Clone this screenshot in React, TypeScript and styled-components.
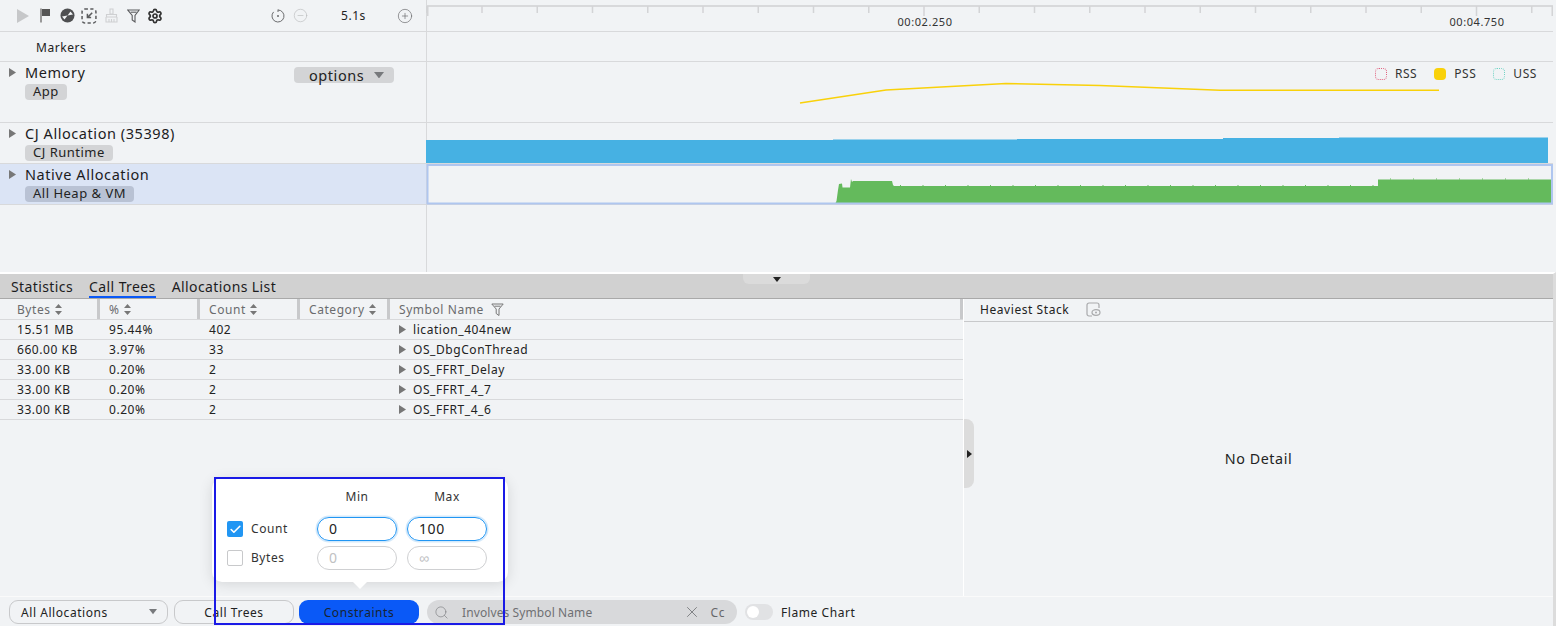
import React from "react";
import styled, { createGlobalStyle } from "styled-components";
import { CircleMinus, CirclePlus, Search, X, Settings, Check } from "lucide-react";

const GlobalStyle = createGlobalStyle`
  html, body { margin: 0; padding: 0; background: #f1f3f5; }
  body {
    font-family: "Noto Sans", "Liberation Sans", sans-serif;
    letter-spacing: 0.56px;
    color: #1c1c1e;
  }
`;

const rows = [
  { bytes: "15.51 MB", pct: "95.44%", count: "402", name: "lication_404new" },
  { bytes: "660.00 KB", pct: "3.97%", count: "33", name: "OS_DbgConThread" },
  { bytes: "33.00 KB", pct: "0.20%", count: "2", name: "OS_FFRT_Delay" },
  { bytes: "33.00 KB", pct: "0.20%", count: "2", name: "OS_FFRT_4_7" },
  { bytes: "33.00 KB", pct: "0.20%", count: "2", name: "OS_FFRT_4_6" },
];

const columns = ["Bytes", "%", "Count", "Category"];

const ticks = Array.from({ length: 21 }, (_, i) => 427 + i * 55.25);

// little teeth along the top of the native allocation area
const greenSpikes = Array.from({ length: 22 }, (_, i) => 900 + i * 22.5);
const greenSpikes2 = Array.from({ length: 8 }, (_, i) => 1390 + i * 23);

const Sorter = () => (
  <SortIcon width="7" height="11" viewBox="0 0 7 11">
    <path d="M3.5 0L7 4H0z M3.5 11L0 7h7z" fill="#777" />
  </SortIcon>
);

const Caret = () => (
  <CaretIcon width="7" height="9" viewBox="0 0 7 9">
    <path d="M0 0L7 4.5L0 9z" fill="#777" />
  </CaretIcon>
);

const DownCaret = ({ width }: { width: number }) => (
  <svg width={width} height={width * 0.65} viewBox="0 0 11 7">
    <path d="M0 0H11L5.5 7z" fill="#77797c" />
  </svg>
);

const Toolbar = () => (
  <ToolbarRow>
    <ToolIcon>
      <svg width="14" height="16" viewBox="0 0 14 16"><path d="M1 1L13 8L1 15z" fill="#c6c7c9" /></svg>
    </ToolIcon>
    <ToolIcon>
      <svg width="12" height="15" viewBox="0 0 12 15"><path d="M1 0.5H3V14.5H1z" fill="#999" /><path d="M3 1H11V8H3z" fill="#555" /></svg>
    </ToolIcon>
    <ToolIcon>
      <svg width="15" height="15" viewBox="0 0 15 15">
        <circle cx="7.5" cy="7.5" r="7" fill="#4e4f51" />
        <path d="M7.5 7.5L10.500 3.500L13 6.500z M7.5 7.5L4.500 11.500L2 8.500z" fill="#f1f3f5" />
      </svg>
    </ToolIcon>
    <ToolIcon>
      <svg width="16" height="16" viewBox="0 0 15 15" fill="none" stroke="#5b5c5e" strokeWidth="1.4">
        <rect x="1" y="1" width="13" height="13" rx="2.5" strokeDasharray="3 2.2" />
        <path d="M10.5 4.5L6 9M6 5.5V9H9.5" />
      </svg>
    </ToolIcon>
    <ToolIcon>
      <svg width="15" height="15" viewBox="0 0 15 15" fill="none" stroke="#cfd0d2" strokeWidth="1.1">
        <path d="M6 1H9V6H6z M2.5 6.5H12.5V9H2.5z M2 9V14H13V9 M5 11V14 M7.5 11V14 M10 11V14" />
      </svg>
    </ToolIcon>
    <ToolIcon>
      <svg width="13" height="14" viewBox="0 0 13 14" fill="none" stroke="#5b5c5e" strokeWidth="1.1">
        <path d="M0.8 1H12.2L8 6.5V13L5.2 11V6.5z" />
        <path d="M3.6 3.2H9.6" />
      </svg>
    </ToolIcon>
    <ToolIcon>
      <Settings size={16} strokeWidth={2.6} color="#333" />
    </ToolIcon>
    <ZoomGroup>
      <ToolIcon>
        <svg width="14" height="14" viewBox="0 0 14 14" fill="none" stroke="#6a6b6d" strokeWidth="1">
          <path d="M7 1A6 6 0 1 1 2.6 2.9" />
          <path d="M7 0.5V3" />
          <circle cx="7" cy="7" r="1" fill="#6a6b6d" stroke="none" />
        </svg>
      </ToolIcon>
      <ToolIcon>
        <CircleMinus size={15} strokeWidth={1} color="#b9babc" />
      </ToolIcon>
      <ZoomValue>5.1s</ZoomValue>
      <ToolIcon>
        <CirclePlus size={16} strokeWidth={1} color="#66676a" />
      </ToolIcon>
    </ZoomGroup>
  </ToolbarRow>
);

const App = () => {
  return (
    <Page>
      <GlobalStyle />
      <Timeline>
        <Track $height={32}>
          <LabelCell>
            <Toolbar />
          </LabelCell>
          <ChartCell>
            <Chart viewBox="427 0 1126 31">
              <rect x="427" y="5" width="1126" height="2" fill="#d8d9db" />
              {ticks.map((x, i) => (
                <rect key={i} x={x - 1} y="6" width="1.5" height={i === 9 || i === 19 ? 10 : 7} fill="#d3d4d6" />
              ))}
              <rect x="427" y="6" width="1.5" height="10" fill="#d3d4d6" />
              <rect x="1551.5" y="6" width="1.5" height="10" fill="#d3d4d6" />
              <RulerText x="925" y="26">00:02.250</RulerText>
              <RulerText x="1477" y="26">00:04.750</RulerText>
            </Chart>
          </ChartCell>
        </Track>

        <Track $height={30}>
          <LabelCell>
            <MarkerTitle>Markers</MarkerTitle>
          </LabelCell>
          <ChartCell />
        </Track>

        <Track $height={61}>
          <LabelCell>
            <Caret />
            <TitleBlock>
              <TrackTitle>Memory</TrackTitle>
              <Tag>App</Tag>
            </TitleBlock>
            <OptionsPill>
              options
              <DownCaret width={10} />
            </OptionsPill>
          </LabelCell>
          <ChartCell>
            <Chart viewBox="427 62 1126 60">
              <polyline
                points="800,103 886,90 1006,83.5 1100,85.5 1220,90.3 1439,90.3"
                fill="none"
                stroke="#f9d10a"
                strokeWidth="1.5"
              />
            </Chart>
            <Legend>
              <LegendItem>
                <LegendSwatch $color="#e0607e" />
                RSS
              </LegendItem>
              <LegendItem>
                <LegendSwatch $color="#f9d10a" $filled />
                PSS
              </LegendItem>
              <LegendItem>
                <LegendSwatch $color="#6fd3c4" />
                USS
              </LegendItem>
            </Legend>
          </ChartCell>
        </Track>

        <Track $height={41}>
          <LabelCell>
            <Caret />
            <TitleBlock>
              <TrackTitle>CJ Allocation (35398)</TrackTitle>
              <Tag>CJ Runtime</Tag>
            </TitleBlock>
          </LabelCell>
          <ChartCell>
            <Chart viewBox="427 123 1126 40">
              <path
                d="M426 140H833V139.5H1017V139H1223V138H1339V137.4H1548V163H426z"
                fill="#46b1e3"
              />
            </Chart>
          </ChartCell>
        </Track>

        <Track $height={41}>
          <LabelCell $selected>
            <Caret />
            <TitleBlock>
              <TrackTitle>Native Allocation</TrackTitle>
              <Tag $selected>All Heap &amp; VM</Tag>
            </TitleBlock>
          </LabelCell>
          <ChartCell>
            <Chart viewBox="427 164 1126 40">
              <path
                d="M835 204L836.500 201L838 190L839 184L842 183.500L842.500 187.500L850 187.500L851 179L852 182L853 181L892 181L893 185L894 186L1378 186L1378 179.500L1553 179.500V204z"
                fill="#64ba5c"
              />
              {greenSpikes.map((x) => (
                <rect key={x} x={x} y="185" width="1" height="1" fill="#64ba5c" />
              ))}
              {greenSpikes2.map((x) => (
                <rect key={x} x={x} y="178.500" width="1" height="1" fill="#64ba5c" />
              ))}
              <rect x="427.500" y="165" width="1124.500" height="38.500" fill="none" stroke="#afc6ef" strokeWidth="2" />
            </Chart>
          </ChartCell>
        </Track>

        <EmptyTrack>
          <LabelCell />
          <ChartCell />
        </EmptyTrack>
      </Timeline>

      <Workspace>
        <TabBar>
          <Tab>Statistics</Tab>
          <Tab $active>Call Trees</Tab>
          <Tab>Allocations List</Tab>
          <SashTab>
            <svg width="8" height="5" viewBox="0 0 8 5">
              <path d="M0 0H8L4 5z" fill="#222" />
            </svg>
          </SashTab>
        </TabBar>

        <Lower>
          <TablePane>
            <HeaderRow>
              {columns.map((c) => (
                <HeaderCell key={c}>
                  {c}
                  <Sorter />
                </HeaderCell>
              ))}
              <SymbolHeader>
                Symbol Name
                <svg width="13" height="13" viewBox="0 0 13 13" fill="none" stroke="#777" strokeWidth="1">
                  <path d="M0.8 1H12.2L8 6V12.500L5.200 10.500V6z" />
                  <path d="M3.500 3.200H9.500" />
                </svg>
              </SymbolHeader>
            </HeaderRow>
            {rows.map((r) => (
              <BodyRow key={r.name}>
                <BodyCell>{r.bytes}</BodyCell>
                <BodyCell>{r.pct}</BodyCell>
                <BodyCell>{r.count}</BodyCell>
                <BodyCell />
                <SymbolCell>
                  <Caret />
                  {r.name}
                </SymbolCell>
              </BodyRow>
            ))}
          </TablePane>
          <DetailPane>
            <DetailHeader>
              Heaviest Stack
              <svg width="15" height="15" viewBox="0 0 15 15" fill="none" stroke="#a9aaac" strokeWidth="1.2">
                <path d="M6 14H3A2 2 0 0 1 1 12V3A2 2 0 0 1 3 1H11A2 2 0 0 1 13 3V6" />
                <ellipse cx="10" cy="10.500" rx="4" ry="2.800" />
                <circle cx="10" cy="10.500" r="1" fill="#a9aaac" stroke="none" />
              </svg>
            </DetailHeader>
            <DetailBody>No Detail</DetailBody>
            <SideHandle>
              <svg width="5" height="8" viewBox="0 0 5 8">
                <path d="M0 0L5 4L0 8z" fill="#222" />
              </svg>
            </SideHandle>
          </DetailPane>
        </Lower>

        <BottomBar>
          <SelectBox>
            All Allocations
            <DownCaret width={8} />
          </SelectBox>
          <OutlineButton>Call Trees</OutlineButton>
          <PrimaryButton>Constraints</PrimaryButton>
          <SearchBox>
            <Search size={15} strokeWidth={1} color="#77797c" />
            <SearchText>Involves Symbol Name</SearchText>
            <X size={18} strokeWidth={1.2} color="#77797c" />
            <CaseToggle>Cc</CaseToggle>
          </SearchBox>
          <Toggle>
            <Knob />
          </Toggle>
          <ToggleLabel>Flame Chart</ToggleLabel>
        </BottomBar>
      </Workspace>

      <Popover>
        <PopHeader>
          <span>Min</span>
          <span>Max</span>
        </PopHeader>
        <PopRow>
          <CheckBox $checked>
            <Check size={13} strokeWidth={3} color="#fff" />
          </CheckBox>
          <PopLabel>Count</PopLabel>
          <ValueBox $active>0</ValueBox>
          <ValueBox $active>100</ValueBox>
        </PopRow>
        <PopRow>
          <CheckBox />
          <PopLabel>Bytes</PopLabel>
          <ValueBox>0</ValueBox>
          <ValueBox>∞</ValueBox>
        </PopRow>
      </Popover>
      <Highlight />
    </Page>
  );
};

export default App;

const Page = styled.div`
  position: relative;
  width: 1556px;
  height: 626px;
  overflow: hidden;
  display: flex;
  flex-direction: column;
  background: #f1f3f5;
`;

const Timeline = styled.div`
  height: 272px;
  width: 1553px;
  display: flex;
  flex-direction: column;
  flex-shrink: 0;
`;

const Workspace = styled.div`
  flex: 1;
  min-height: 0;
  display: flex;
  flex-direction: column;
  border-right: 3px solid #dcdcdc;
  border-top: 2px solid #fff;
`;

const Track = styled.div<{ $height: number }>`
  height: ${(p) => p.$height}px;
  box-sizing: border-box;
  display: flex;
  flex-shrink: 0;
  border-bottom: 1px solid #d8d9db;
`;

const EmptyTrack = styled.div`
  flex: 1;
  display: flex;
`;

const LabelCell = styled.div<{ $selected?: boolean }>`
  width: 427px;
  flex-shrink: 0;
  display: flex;
  align-items: flex-start;
  padding-left: 9px;
  box-sizing: border-box;
  border-right: 1px solid #d8d9db;
  background: ${(p) => (p.$selected ? "#dbe4f5" : "transparent")};
`;

const ChartCell = styled.div`
  position: relative;
  flex: 1;
  min-width: 0;
`;

const Chart = styled.svg`
  display: block;
  width: 100%;
  height: 100%;
  overflow: visible;
`;

const RulerText = styled.text`
  font-size: 11px;
  fill: #333;
  text-anchor: middle;
`;

const ToolbarRow = styled.div`
  display: flex;
  align-items: center;
  height: 31px;
  width: 100%;
  padding-left: 3px;
`;

const ToolIcon = styled.div`
  width: 22px;
  height: 22px;
  flex-shrink: 0;
  display: flex;
  align-items: center;
  justify-content: center;
`;

const ZoomGroup = styled.div`
  display: flex;
  align-items: center;
  margin-left: 101px;
`;

const ZoomValue = styled.div`
  width: 83px;
  padding-left: 30px;
  box-sizing: border-box;
  font-size: 12px;
  color: #222;
`;

const MarkerTitle = styled.div`
  margin-left: 27px;
  line-height: 31px;
  font-size: 12px;
  color: #222;
`;

const CaretIcon = styled.svg`
  display: block;
  flex-shrink: 0;
  margin-top: 6px;
`;

const TitleBlock = styled.div`
  display: flex;
  flex-direction: column;
  align-items: flex-start;
  margin-left: 9px;
`;

const TrackTitle = styled.div`
  font-size: 14.5px;
  line-height: 20px;
  color: #1c1c1e;
`;

const Tag = styled.div<{ $selected?: boolean }>`
  height: 16px;
  margin-top: 2px;
  padding: 0 8px;
  border-radius: 4px;
  font-size: 13px;
  line-height: 15px;
  letter-spacing: 0.5px;
  color: #222;
  background: ${(p) => (p.$selected ? "#b9c2d4" : "#d3d4d6")};
`;

const OptionsPill = styled.div`
  margin-left: auto;
  margin-right: 32px;
  margin-top: 5px;
  width: 100px;
  height: 16px;
  box-sizing: border-box;
  padding: 0 10px 0 15px;
  display: flex;
  align-items: center;
  justify-content: space-between;
  border-radius: 4px;
  background: #d3d4d6;
  font-size: 14.5px;
  color: #222;
`;

const Legend = styled.div`
  position: absolute;
  top: 5px;
  right: 16px;
  display: flex;
  gap: 17px;
`;

const LegendItem = styled.div`
  display: flex;
  align-items: center;
  gap: 8px;
  font-size: 12px;
  line-height: 14px;
  color: #333;
`;

const LegendSwatch = styled.span<{ $color: string; $filled?: boolean }>`
  width: 12px;
  height: 12px;
  box-sizing: border-box;
  border-radius: 4px;
  border: 1px dotted ${(p) => p.$color};
  background: ${(p) => (p.$filled ? p.$color : "transparent")};
`;

const TabBar = styled.div`
  position: relative;
  height: 25px;
  box-sizing: border-box;
  flex-shrink: 0;
  display: flex;
  align-items: stretch;
  gap: 16px;
  padding-left: 11px;
  background: #d1d1d1;
  border-bottom: 1px solid #a9a9a9;
`;

const Tab = styled.div<{ $active?: boolean }>`
  font-size: 14px;
  line-height: 25px;
  height: 24px;
  box-sizing: border-box;
  letter-spacing: 0.4px;
  color: #1c1c1e;
  border-bottom: ${(p) => (p.$active ? "2px solid #0a59f7" : "none")};
`;

const SashTab = styled.div`
  position: absolute;
  left: 743px;
  top: 0;
  width: 67px;
  height: 10px;
  display: flex;
  align-items: center;
  justify-content: center;
  background: #dbdbdb;
  border-radius: 0 0 6px 6px;
`;

const Lower = styled.div`
  flex: 1;
  min-height: 0;
  display: flex;
`;

const TablePane = styled.div`
  width: 964px;
  flex-shrink: 0;
  box-sizing: border-box;
  border-right: 1px solid #fff;
`;

const HeaderRow = styled.div`
  display: grid;
  grid-template-columns: 100px 100px 100px 90px 1fr;
  height: 21px;
  box-sizing: border-box;
  border-bottom: 1px solid #d8d9db;
`;

const HeaderCell = styled.div`
  display: flex;
  align-items: center;
  gap: 4px;
  padding-left: 9px;
  font-size: 12px;
  color: #6a6b6d;
  border-right: 3px solid #c8c9cb;
  &:first-child { padding-left: 17px; }
`;

const SymbolHeader = styled.div`
  display: flex;
  align-items: center;
  gap: 7px;
  padding-left: 9px;
  font-size: 12px;
  color: #6a6b6d;
  border-right: 3px solid #c8c9cb;
`;

const SortIcon = styled.svg`
  display: block;
`;

const BodyRow = styled.div`
  display: grid;
  grid-template-columns: 100px 100px 100px 90px 1fr;
  height: 20px;
  box-sizing: border-box;
  border-bottom: 1px solid #d8d9db;
`;

const BodyCell = styled.div`
  padding-left: 9px;
  font-size: 12px;
  line-height: 19px;
  color: #222;
  &:first-child { padding-left: 17px; }
`;

const SymbolCell = styled.div`
  display: flex;
  align-items: center;
  gap: 7px;
  padding-left: 9px;
  font-size: 12px;
  color: #222;
  svg { margin-top: 0; }
`;

const DetailPane = styled.div`
  position: relative;
  flex: 1;
  display: flex;
  flex-direction: column;
`;

const DetailHeader = styled.div`
  height: 23px;
  flex-shrink: 0;
  box-sizing: border-box;
  display: flex;
  align-items: center;
  gap: 17px;
  padding: 0 0 1px 16px;
  font-size: 12px;
  color: #222;
  border-bottom: 1px solid #c8c9cb;
`;

const DetailBody = styled.div`
  flex: 1;
  display: flex;
  align-items: center;
  justify-content: center;
  padding-bottom: 2px;
  font-size: 14.3px;
  color: #222;
`;

const SideHandle = styled.div`
  position: absolute;
  left: 0;
  top: 120px;
  width: 10px;
  height: 69px;
  display: flex;
  align-items: center;
  justify-content: center;
  background: #dcdcdc;
  border-radius: 0 8px 8px 0;
`;

const BottomBar = styled.div`
  height: 30px;
  flex-shrink: 0;
  box-sizing: border-box;
  display: flex;
  align-items: center;
  padding: 3px 0 2px 9px;
  border-top: 1px solid #fafafa;
`;

const SelectBox = styled.div`
  width: 159px;
  height: 24px;
  box-sizing: border-box;
  display: flex;
  align-items: center;
  justify-content: space-between;
  padding: 0 10px 0 11px;
  border: 1px solid #c8c9cb;
  border-radius: 9px;
  font-size: 12px;
  color: #222;
`;

const OutlineButton = styled.div`
  width: 120px;
  height: 24px;
  margin-left: 6px;
  box-sizing: border-box;
  display: flex;
  align-items: center;
  justify-content: center;
  border: 1px solid #c8c9cb;
  border-radius: 9px;
  font-size: 12px;
  color: #222;
`;

const PrimaryButton = styled.div`
  width: 120px;
  height: 24px;
  margin-left: 5px;
  display: flex;
  align-items: center;
  justify-content: center;
  border-radius: 9px;
  background: #0a59f7;
  font-size: 12px;
  color: #182431;
`;

const SearchBox = styled.div`
  width: 310px;
  height: 24px;
  margin-left: 8px;
  box-sizing: border-box;
  display: flex;
  align-items: center;
  padding: 0 12px 0 7px;
  border-radius: 12px;
  background: #d8d9db;
`;

const SearchText = styled.div`
  flex: 1;
  margin-left: 13px;
  font-size: 12px;
  letter-spacing: 0.1px;
  color: #6f7073;
`;

const CaseToggle = styled.div`
  margin-left: 10px;
  font-size: 12px;
  color: #66676a;
`;

const Toggle = styled.div`
  width: 28px;
  height: 16px;
  margin-left: 8px;
  padding: 2px;
  box-sizing: border-box;
  border-radius: 8px;
  background: #e1e2e4;
`;

const Knob = styled.div`
  width: 12px;
  height: 12px;
  border-radius: 50%;
  background: #fff;
`;

const ToggleLabel = styled.div`
  margin-left: 8px;
  font-size: 12px;
  color: #222;
`;

const Popover = styled.div`
  position: absolute;
  left: 212px;
  top: 478px;
  width: 296px;
  height: 104px;
  box-sizing: border-box;
  padding: 11px 15px 0;
  background: #fff;
  border-radius: 10px;
  box-shadow: 0 2px 14px rgba(0, 0, 0, 0.12);

  &::after {
    content: "";
    position: absolute;
    left: 141px;
    bottom: -7px;
    border-left: 7px solid transparent;
    border-right: 7px solid transparent;
    border-top: 7px solid #fff;
  }
`;

const PopHeader = styled.div`
  display: grid;
  grid-template-columns: 80px 80px;
  column-gap: 10px;
  margin-left: 90px;
  height: 28px;
  font-size: 12px;
  line-height: 16px;
  color: #333;
  text-align: center;
`;

const PopRow = styled.div`
  display: flex;
  align-items: center;
  gap: 10px;
  height: 24px;
  margin-bottom: 5px;
`;

const CheckBox = styled.div<{ $checked?: boolean }>`
  width: 16px;
  height: 16px;
  margin-right: -2px;
  flex-shrink: 0;
  box-sizing: border-box;
  display: flex;
  align-items: center;
  justify-content: center;
  border-radius: 2px;
  border: ${(p) => (p.$checked ? "none" : "1px solid #c8c9cb")};
  background: ${(p) => (p.$checked ? "#2196f3" : "#fff")};
`;

const PopLabel = styled.div`
  width: 56px;
  flex-shrink: 0;
  padding-bottom: 2px;
  font-size: 12px;
  color: #333;
`;

const ValueBox = styled.div<{ $active?: boolean }>`
  width: 80px;
  height: 24px;
  flex-shrink: 0;
  box-sizing: border-box;
  display: flex;
  align-items: center;
  padding: 0 0 2px 11px;
  border-radius: 12px;
  font-size: 14px;
  border: 1px solid ${(p) => (p.$active ? "#2196f3" : "#cfd0d2")};
  box-shadow: ${(p) => (p.$active ? "0 0 0 1.5px #d3e9fb" : "none")};
  color: ${(p) => (p.$active ? "#222" : "#c0c1c3")};
`;

const Highlight = styled.div`
  position: absolute;
  left: 214px;
  top: 477px;
  width: 291px;
  height: 148px;
  box-sizing: border-box;
  border: 2px solid #1a1ae6;
  pointer-events: none;
`;
